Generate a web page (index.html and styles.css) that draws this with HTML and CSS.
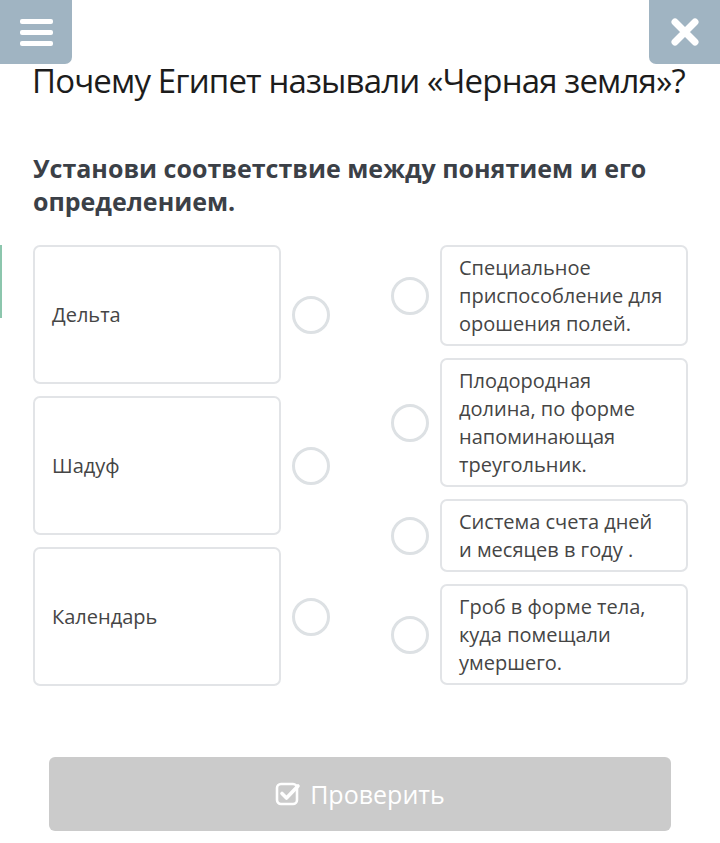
FILE: index.html
```html
<!DOCTYPE html>
<html lang="ru">
<head>
    <meta charset="UTF-8">
    <meta name="viewport" content="width=device-width, initial-scale=1.0">
    <title>Черная земля</title>
    <link rel="stylesheet" href="styles.css">
</head>
<body>

    <div class="top-bar">
        <button class="menu-btn" aria-label="Меню">
            <span></span><span></span><span></span>
        </button>
        <button class="close-btn" aria-label="Закрыть">
            <svg width="28" height="28" viewBox="0 0 28 28">
                <path d="M4 4 L24 24 M24 4 L4 24" stroke="#fff" stroke-width="7" stroke-linecap="round"/>
            </svg>
        </button>
    </div>

    <div class="side-mark"></div>

    <h1 class="title">Почему Египет называли «Черная земля»?</h1>

    <h2 class="task">Установи соответствие между понятием и его определением.</h2>

    <div class="match">
        <div class="left-col">
            <div class="row">
                <div class="card term">Дельта</div>
                <span class="dot"></span>
            </div>
            <div class="row">
                <div class="card term">Шадуф</div>
                <span class="dot"></span>
            </div>
            <div class="row">
                <div class="card term">Календарь</div>
                <span class="dot"></span>
            </div>
        </div>
        <div class="right-col">
            <div class="row">
                <span class="dot"></span>
                <div class="card def">Специальное приспособление для орошения полей.</div>
            </div>
            <div class="row">
                <span class="dot"></span>
                <div class="card def">Плодородная долина, по форме напоминающая треугольник.</div>
            </div>
            <div class="row">
                <span class="dot"></span>
                <div class="card def">Система счета дней и месяцев в году .</div>
            </div>
            <div class="row">
                <span class="dot"></span>
                <div class="card def">Гроб в форме тела, куда помещали умершего.</div>
            </div>
        </div>
    </div>

    <button class="check-btn">
        <svg width="26" height="26" viewBox="0 0 26 26">
            <rect x="2" y="3" width="20" height="20" rx="4" fill="none" stroke="#fff" stroke-width="2.6"/>
            <path d="M7 12.5 L11.5 17 L23 5" fill="none" stroke="#fff" stroke-width="3.6" stroke-linecap="round" stroke-linejoin="round"/>
        </svg>
        Проверить
    </button>

</body>
</html>
```

FILE: styles.css
```css
body {
    font-family: "Open Sans", "Liberation Sans", sans-serif;
    margin: 0;
    padding: 0 32px 0 33px;
    background: #fff;
    color: #444;
}
.top-bar {
    display: flex;
    justify-content: space-between;
    margin: 0 -32px 0 -33px;
    height: 64px;
}
.menu-btn, .close-btn {
    border: none;
    background-color: #a0b4c2;
    padding: 0;
    cursor: pointer;
    display: flex;
    align-items: center;
    justify-content: center;
}
.menu-btn {
    width: 72px;
    flex-direction: column;
    gap: 6px;
    border-bottom-right-radius: 7px;
}
.menu-btn span {
    display: block;
    width: 33px;
    height: 5px;
    border-radius: 2px;
    background: #fff;
}
.close-btn {
    width: 71px;
    border-bottom-left-radius: 7px;
}
.side-mark {
    position: absolute;
    left: 0;
    top: 245px;
    width: 2px;
    height: 73px;
    background: #8cc6ad;
}
.title {
    font-size: 33px;
    font-weight: 400;
    line-height: 34px;
    letter-spacing: -0.85px;
    white-space: nowrap;
    color: #1c1c1c;
    margin: 0 0 0 -1px;
}
.task {
    font-size: 25px;
    font-weight: 700;
    line-height: 33px;
    color: #3b4047;
    margin: 54px 0 0 0;
}
.match {
    display: flex;
    justify-content: space-between;
    margin-top: 27px;
}
.left-col, .right-col {
    display: flex;
    flex-direction: column;
    gap: 12px;
}
.row {
    display: flex;
    align-items: center;
    gap: 11px;
}
.card {
    width: 248px;
    box-sizing: border-box;
    border: 2px solid #e2e4e7;
    border-radius: 7px;
    background: #fff;
    font-size: 20px;
    line-height: 28px;
    color: #454545;
}
.term {
    height: 139px;
    display: flex;
    align-items: center;
    padding: 0 17px;
}
.def {
    padding: 6.5px 19px 6.5px 17px;
}
.dot {
    width: 38px;
    height: 38px;
    box-sizing: border-box;
    border: 3px solid #dde1e4;
    border-radius: 50%;
    flex-shrink: 0;
}
.check-btn {
    display: flex;
    align-items: center;
    justify-content: center;
    gap: 9px;
    width: 622px;
    height: 74px;
    margin: 71px 0 0 16px;
    border: none;
    border-radius: 6px;
    background-color: #cbcbcb;
    color: #fff;
    font-family: "Open Sans", "Liberation Sans", sans-serif;
    font-size: 25px;
}
```
